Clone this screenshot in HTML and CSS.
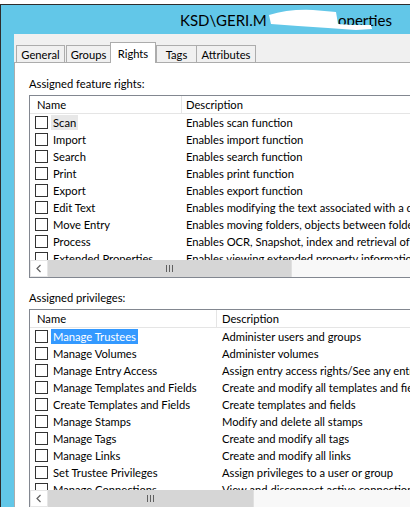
FILE: index.html
```html
<!DOCTYPE html>
<html>
<head>
<meta charset="utf-8">
<link rel="stylesheet" href="styles.css">
</head>
<body>
<div class="win">
  <div class="titlebar">
    <span class="t1">KSD\GERI.M</span><span class="t2">operties</span>
    <svg class="blob" width="106" height="24" viewBox="0 0 106 24"><path d="M1,7 Q20,1 45,2 L68,4 L70,16 L85,17 L103,17 L104,21 L88,22 L60,20 L30,18 L3,16 Z" fill="#fff"/></svg>
  </div>
  <div class="client">
    <div class="tabs">
      <div class="tab w-general">General</div>
      <div class="tab w-groups">Groups</div>
      <div class="tab sel w-rights">Rights</div>
      <div class="tab w-tags">Tags</div>
      <div class="tab w-attr">Attributes</div>
    </div>
    <div class="panel">
      <div class="label">Assigned feature rights:</div>
      <div class="list list1">
        <div class="hdr"><div class="c1">Name</div><div class="c2">Description</div></div>
        <div class="rows">
          <div class="row"><div class="c1"><span class="cb"></span><span class="nm focus">Scan</span></div><div class="c2">Enables scan function</div></div>
          <div class="row"><div class="c1"><span class="cb"></span><span class="nm">Import</span></div><div class="c2">Enables import function</div></div>
          <div class="row"><div class="c1"><span class="cb"></span><span class="nm">Search</span></div><div class="c2">Enables search function</div></div>
          <div class="row"><div class="c1"><span class="cb"></span><span class="nm">Print</span></div><div class="c2">Enables print function</div></div>
          <div class="row"><div class="c1"><span class="cb"></span><span class="nm">Export</span></div><div class="c2">Enables export function</div></div>
          <div class="row"><div class="c1"><span class="cb"></span><span class="nm">Edit Text</span></div><div class="c2">Enables modifying the text associated with a document</div></div>
          <div class="row"><div class="c1"><span class="cb"></span><span class="nm">Move Entry</span></div><div class="c2">Enables moving folders, objects between folders</div></div>
          <div class="row"><div class="c1"><span class="cb"></span><span class="nm">Process</span></div><div class="c2">Enables OCR, Snapshot, index and retrieval of pages</div></div>
          <div class="row"><div class="c1"><span class="cb"></span><span class="nm">Extended Properties</span></div><div class="c2">Enables viewing extended property information</div></div>
        </div>
        <div class="hs">
          <div class="btn"><svg width="6" height="9" viewBox="0 0 6 9"><polyline points="4.5,1 1,4.5 4.5,8" fill="none" stroke="#606060" stroke-width="1.2"/></svg></div>
          <div class="thumb th1"><span class="grip"></span></div>
          <div class="track"></div>
          <div class="btn"><svg width="6" height="9" viewBox="0 0 6 9"><polyline points="1.5,1 5,4.5 1.5,8" fill="none" stroke="#606060" stroke-width="1.2"/></svg></div>
        </div>
      </div>
      <div class="label label2">Assigned privileges:</div>
      <div class="list list2">
        <div class="hdr"><div class="c1">Name</div><div class="c2">Description</div></div>
        <div class="rows">
          <div class="row"><div class="c1"><span class="cb"></span><span class="nm selected">Manage Trustees</span></div><div class="c2">Administer users and groups</div></div>
          <div class="row"><div class="c1"><span class="cb"></span><span class="nm">Manage Volumes</span></div><div class="c2">Administer volumes</div></div>
          <div class="row"><div class="c1"><span class="cb"></span><span class="nm">Manage Entry Access</span></div><div class="c2">Assign entry access rights/See any entry</div></div>
          <div class="row"><div class="c1"><span class="cb"></span><span class="nm">Manage Templates and Fields</span></div><div class="c2">Create and modify all templates and fields</div></div>
          <div class="row"><div class="c1"><span class="cb"></span><span class="nm">Create Templates and Fields</span></div><div class="c2">Create templates and fields</div></div>
          <div class="row"><div class="c1"><span class="cb"></span><span class="nm">Manage Stamps</span></div><div class="c2">Modify and delete all stamps</div></div>
          <div class="row"><div class="c1"><span class="cb"></span><span class="nm">Manage Tags</span></div><div class="c2">Create and modify all tags</div></div>
          <div class="row"><div class="c1"><span class="cb"></span><span class="nm">Manage Links</span></div><div class="c2">Create and modify all links</div></div>
          <div class="row"><div class="c1"><span class="cb"></span><span class="nm">Set Trustee Privileges</span></div><div class="c2">Assign privileges to a user or group</div></div>
          <div class="row"><div class="c1"><span class="cb"></span><span class="nm">Manage Connections</span></div><div class="c2">View and disconnect active connections</div></div>
        </div>
        <div class="hs">
          <div class="btn"><svg width="6" height="9" viewBox="0 0 6 9"><polyline points="4.5,1 1,4.5 4.5,8" fill="none" stroke="#606060" stroke-width="1.2"/></svg></div>
          <div class="thumb th2"><span class="grip"></span></div>
          <div class="track"></div>
          <div class="btn"><svg width="6" height="9" viewBox="0 0 6 9"><polyline points="1.5,1 5,4.5 1.5,8" fill="none" stroke="#606060" stroke-width="1.2"/></svg></div>
        </div>
      </div>
    </div>
  </div>
</div>
</body>
</html>
```

FILE: styles.css
```css
* { box-sizing: border-box; }
html, body { margin: 0; padding: 0; }
body {
  width: 410px;
  height: 507px;
  overflow: hidden;
  background: #fff;
  font-family: "Segoe UI", Lato, "Noto Sans", sans-serif;
  font-size: 11.2px;
  color: #000;
}
.win {
  margin-top: 4px;
  width: 470px;
  height: 503px;
  border-top: 1px solid #2d2d2d;
  border-left: 1px solid #2d2d2d;
  background: #62c7e8;
  padding-left: 13px;
}
.titlebar {
  position: relative;
  height: 29px;
  margin-left: -13px;
  padding-left: 179px;
  display: flex;
  align-items: center;
  font-size: 15px;
  white-space: nowrap;
}
.t1 { display: inline-block; width: 158px; }
.blob { position: absolute; left: 267px; top: 3px; }
.client {
  background: #f0f0f0;
  height: 474px;
  padding-top: 8px;
}
.tabs {
  display: flex;
  align-items: flex-end;
  height: 20px;
  padding-left: 2px;
  position: relative;
  z-index: 1;
}
.tab {
  height: 17px;
  border: 1px solid #acacac;
  border-bottom: none;
  background: #f0f0f0;
  display: flex;
  align-items: center;
  justify-content: center;
  white-space: nowrap;
}
.tab.sel {
  height: 21px;
  margin-bottom: -1px;
  background: #fff;
}
.w-general { width: 49px; }
.w-groups { width: 45px; margin-left: 1px; }
.w-rights { width: 46px; margin-left: -1px; }
.w-tags { width: 41px; }
.w-attr { width: 60px; margin-left: -1px; }
.panel {
  background: #fff;
  border: 1px solid #acacac;
  height: 454px;
  padding: 13px 0 0 14px;
}
.label {
  height: 15px;
  line-height: 15px;
  margin-bottom: 4px;
  white-space: nowrap;
}
.label2 { margin-top: 12px; }
.list {
  border: 1px solid #828790;
  width: 400px;
  --c1: 151px;
  --p2: 5px;
  --rows: 146px;
}
.list2 { --c1: 186px; --p2: 6px; --rows: 162px; }
.hdr {
  display: flex;
  height: 18px;
  border-bottom: 1px solid #e5e5e5;
  background: #fff;
  line-height: 17px;
  white-space: nowrap;
}
.hdr .c1 { width: var(--c1); padding-left: 7px; flex: none; }
.hdr .c2 { border-left: 1px solid #e5e5e5; padding-left: calc(var(--p2) - 1px); flex: 1; }
.rows { height: var(--rows); overflow: hidden; }
.row {
  display: flex;
  height: 17px;
  align-items: center;
  white-space: nowrap;
}
.row .c1 {
  width: var(--c1);
  flex: none;
  display: flex;
  align-items: center;
  padding-left: 5px;
}
.row .c2 { padding-left: var(--p2); }
.cb {
  width: 13px;
  height: 13px;
  border: 1px solid #333;
  background: #fff;
  margin-right: 3px;
  flex: none;
}
.nm { padding: 0 2px; height: 15px; line-height: 15px; }
.nm.focus { background: #e8e8e8; }
.nm.selected { background: #3399ff; color: #fff; }
.hs {
  display: flex;
  height: 17px;
  background: #f8f8f8;
}
.btn {
  width: 18px;
  flex: none;
  display: flex;
  align-items: center;
  justify-content: center;
  background: #fff;
  border: 1px solid #e6e6e6;
}
.thumb {
  flex: none;
  background: #d6d6d6;
  display: flex;
  align-items: center;
  justify-content: center;
}
.th1 { width: 243px; }
.th2 { width: 205px; }
.track { flex: 1; border-left: 1px solid #e0e0e0; }
.grip {
  width: 7px;
  height: 7px;
  background: linear-gradient(90deg, #606060 0 1px, transparent 1px 3px, #606060 3px 4px, transparent 4px 6px, #606060 6px 7px);
}
```
